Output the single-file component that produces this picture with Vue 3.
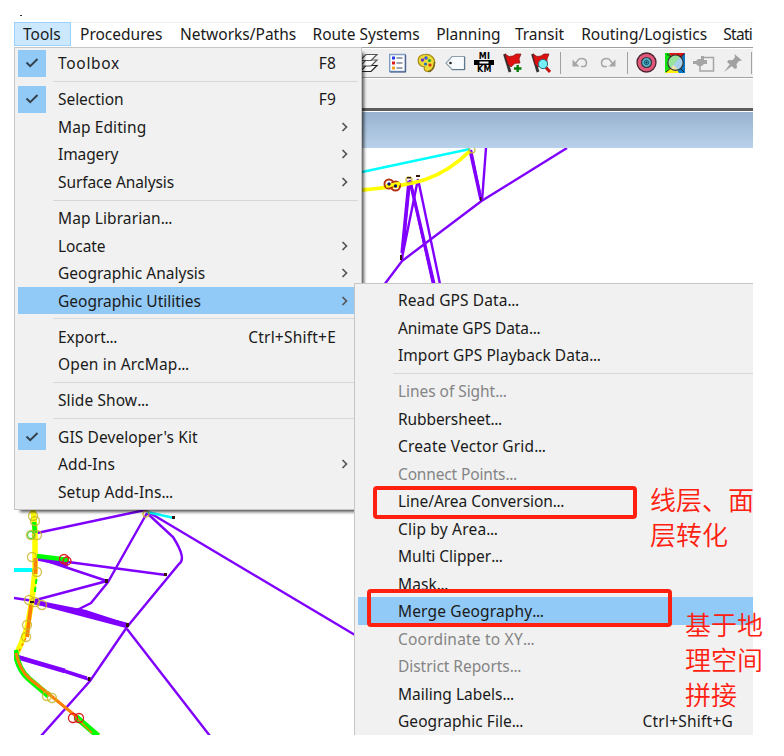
<script setup>
const menuBar = [
  { label: 'Tools', w: 57, active: true },
  { label: 'Procedures', w: 100 },
  { label: 'Networks/Paths', w: 132.5 },
  { label: 'Route Systems', w: 123.7 },
  { label: 'Planning', w: 78.7 },
  { label: 'Transit', w: 66.3 },
  { label: 'Routing/Logistics', w: 142.2 },
  { label: 'Stati', w: 38.6, tight: true }
]

const toolsMenu = [
  { label: 'Toolbox', key: 'F8', checked: true, ls: 0.7 },
  { sep: true },
  { label: 'Selection', key: 'F9', checked: true, ls: -0.05 },
  { label: 'Map Editing', sub: true },
  { label: 'Imagery', sub: true, ls: -0.1 },
  { label: 'Surface Analysis', sub: true, ls: -0.1 },
  { sep: true },
  { label: 'Map Librarian', dots: true },
  { label: 'Locate', sub: true, ls: -0.1 },
  { label: 'Geographic Analysis', sub: true, ls: 0 },
  { label: 'Geographic Utilities', sub: true, hot: true, ls: 0 },
  { sep: true },
  { label: 'Export', dots: true, ls: 0, key: 'Ctrl+Shift+E' },
  { label: 'Open in ArcMap', dots: true, ls: 0.15 },
  { sep: true },
  { label: 'Slide Show', dots: true },
  { sep: true },
  { label: "GIS Developer's Kit", checked: true },
  { label: 'Add-Ins', sub: true },
  { label: 'Setup Add-Ins', dots: true }
]

const geoMenu = [
  { label: 'Read GPS Data', dots: true },
  { label: 'Animate GPS Data', dots: true, ls: -0.1 },
  { label: 'Import GPS Playback Data', dots: true, ls: 0.05 },
  { sep: true },
  { label: 'Lines of Sight', dots: true, off: true, ls: -0.05 },
  { label: 'Rubbersheet', dots: true, ls: -0.1 },
  { label: 'Create Vector Grid', dots: true, ls: 0.15 },
  { label: 'Connect Points', dots: true, off: true, ls: -0.15 },
  { label: 'Line/Area Conversion', dots: true, ls: -0.05 },
  { label: 'Clip by Area', dots: true, ls: 0.2 },
  { label: 'Multi Clipper', dots: true, ls: 0 },
  { label: 'Mask', dots: true },
  { label: 'Merge Geography', dots: true, hot: true, ls: 0.15 },
  { label: 'Coordinate to XY', dots: true, off: true, ls: 0.2 },
  { label: 'District Reports', dots: true, off: true, ls: -0.05 },
  { label: 'Mailing Labels', dots: true, ls: 0 },
  { label: 'Geographic File', dots: true, ls: 0.05, key: 'Ctrl+Shift+G' }
]

const stops = [
  [33, 516], [35, 521], [31, 535], [37, 535], [32, 557], [37, 572], [29, 600], [35, 602], [42, 605],
  [27, 625], [26, 637], [47, 696], [52, 698]
]
</script>

<template>
  <div class="page">
    <span class="speck"></span>
    <div class="window">
      <nav class="menubar">
        <span
          v-for="m in menuBar"
          :key="m.label"
          class="top-item"
          :class="{ active: m.active, tight: m.tight }"
          :style="{ width: m.w + 'px' }"
        >{{ m.label }}</span>
      </nav>

      <div class="toolbar">
        <span class="cell">
          <svg width="20" height="20" viewBox="0 0 20 20" fill="#fff" stroke="#555" stroke-width="1.2">
            <path d="M1 18.500h11l6-6H7z" stroke="#222" /><path d="M1 13h11l6-6H7z" /><path d="M1 7.500h11l6-6H7z" />
          </svg>
        </span>
        <span class="cell">
          <svg width="20" height="20" viewBox="0 0 20 20">
            <path d="M1.700 1.500h15.500v17H1.700z" fill="#fff" stroke="#7f9bc4" stroke-width="1.4" />
            <path d="M17.700 2v17H2" fill="none" stroke="#3f5680" />
            <path d="M8.500 5h6M8.500 10h6M8.500 15h6" stroke="#7b8798" stroke-width="1.300" />
            <path d="M4 3.500h3v3H4z" fill="#2d39e8" /><path d="M4 8.500h3v3H4z" fill="#dc1c1c" /><path d="M4 13.500h3v3H4z" fill="#f0a51c" />
          </svg>
        </span>
        <span class="cell">
          <svg width="20" height="20" viewBox="0 0 20 20">
            <path d="M8 1.500C14 1 18 5 17.700 10c-.2 5-3 8.500-6.700 8.500-3 0-4.500-2-3.500-4.500C4 13.500 1 11.500 1.200 7 1.300 3.500 4 1.700 8 1.500z" fill="#efdb35" stroke="#a58b17" stroke-width="1.200" />
            <path d="M17.500 9c0 6-3 9.500-6.500 9.500" fill="none" stroke="#77651b" stroke-width="1.500" />
            <circle cx="5.500" cy="7" r="1.700" fill="#6b35d0" /><circle cx="9" cy="5" r="1.700" fill="#3153df" />
            <circle cx="12.500" cy="7.500" r="1.600" fill="#21a43a" /><circle cx="13" cy="12" r="1.600" fill="#d82c1c" /><circle cx="8.500" cy="11" r="1.600" fill="#2370c0" />
          </svg>
        </span>
        <span class="cell">
          <svg width="21" height="20" viewBox="0 0 21 20">
            <path d="M1 10.200l6-6.700h12.500v13H7z" fill="#f8fbfd" stroke="#8da0ab" stroke-width="1.200" />
            <path d="M19.700 4v12.700H7" fill="none" stroke="#547088" /><circle cx="5.500" cy="10" r="1.300" fill="#222" />
          </svg>
        </span>
        <span class="cell">
          <svg width="22" height="22" viewBox="0 0 22 22">
            <text x="11.500" y="6.500" class="unit">MI</text>
            <path d="M1 8h20v5H1z" fill="#000" /><path d="M6.500 9.500h9v2H6.500z" fill="#fff" />
            <text x="11.500" y="20" class="unit">KM</text>
          </svg>
        </span>
        <span class="cell">
          <svg width="20" height="20" viewBox="0 0 20 20">
            <path d="M1.500 1l5.500 18" stroke="#333" stroke-width="2.800" /><path d="M2 1l4 2.500 4-.5 3-2 5 0-2 5 1 4-5 .3-4 3.700-3-3z" fill="#de1111" stroke="#811" stroke-width=".7" />
            <path d="M14.700 12v7M11 15.500h7.500" stroke="#077a0c" stroke-width="2.400" />
          </svg>
        </span>
        <span class="cell">
          <svg width="20" height="20" viewBox="0 0 20 20">
            <path d="M1.500 1l5.500 18" stroke="#333" stroke-width="2.800" /><path d="M2 1l4 2.500 4-.5 3-2 5 0-2 5v5l-6 1-3 2-3-3z" fill="#de1111" stroke="#811" stroke-width=".7" />
            <path d="M14.500 14l4.500 5" stroke="#c51010" stroke-width="3" /><circle cx="12" cy="11" r="4.600" fill="#75eef5" stroke="#247482" />
          </svg>
        </span>
        <span class="divider"></span>
        <span class="cell">
          <svg width="18" height="14" viewBox="0 0 18 14" fill="none" stroke="#a6a6a6" stroke-width="1.500">
            <path d="M4 8l3.500-4.500C10 1.500 15.500 2.500 15.500 7c0 2-1 3-2 3.500H10" /><path d="M1.500 3.500v7h7z" fill="#a6a6a6" stroke="none" />
          </svg>
        </span>
        <span class="cell">
          <svg width="18" height="14" viewBox="0 0 18 14" fill="none" stroke="#a6a6a6" stroke-width="1.500">
            <path d="M14 8l-3.500-4.500C8 1.500 2.500 2.500 2.500 7c0 2 1 3 2 3.500H8" /><path d="M16.500 3.500v7h-7z" fill="#a6a6a6" stroke="none" />
          </svg>
        </span>
        <span class="divider"></span>
        <span class="cell">
          <svg width="21" height="21" viewBox="0 0 21 21">
            <circle cx="10.500" cy="10.500" r="9.500" fill="#e2587a" stroke="#4b2330" stroke-width="1.300" />
            <circle cx="10.500" cy="10.500" r="5" fill="#58b6cb" stroke="#34353f" stroke-width="1.200" />
            <circle cx="10.500" cy="10.500" r="2.200" fill="#3fc7e5" stroke="#174a6d" /><circle cx="10.500" cy="10.500" r="1" fill="#111" />
          </svg>
        </span>
        <span class="cell">
          <svg width="20" height="20" viewBox="0 0 20 20">
            <path d="M0 0h20v20H0z" fill="#0876c4" /><path d="M0 0h6l4 10-6 10H0z" fill="#0de20d" /><path d="M4 0h16l-4 5H7z" fill="#e31212" />
            <path d="M0 20l5-5h6l3 5z" fill="#ffef0a" />
            <circle cx="10.500" cy="9.700" r="7.700" fill="#a6d0ea" /><path d="M5 15.200A7.700 7.700 0 0 1 15.500 3.800z" fill="#98e39a" />
            <path d="M5.500 15.500l3-3.500 4.500 5a7.700 7.700 0 0 1-7.500-1.500z" fill="#f1e4a4" />
            <circle cx="10.500" cy="9.700" r="7.700" fill="none" stroke="#333" stroke-width="1.200" /><path d="M1 19l5-4M19 1l-4 3M19 19l-4-4M2 1l4 3" stroke="#222" />
          </svg>
        </span>
        <span class="cell">
          <svg width="22" height="20" viewBox="0 0 22 20">
            <path d="M8 4.500h12.500v13.500H7v-5" fill="none" stroke="#a5a5a5" stroke-width="1.500" />
            <path d="M0 8h3l2-2h3V3h3v4h3v4h-3l-2 2H5l-2-2H0z" fill="#a5a5a5" />
          </svg>
        </span>
        <span class="cell">
          <svg width="20" height="20" viewBox="0 0 20 20" fill="#a0a0a0">
            <path d="M11.500 1L19 7.500l-3 .5-2.500 3 .5 4-2 1-8-7 1.500-2 4 .3 2.500-3z" /><path d="M7 11l-6 8 8-6z" />
          </svg>
        </span>
        <span class="divider"></span>
      </div>

      <div class="dock"></div>
      <div class="caption"></div>

      <svg class="map" width="739" height="587" viewBox="14 148 739 587" fill="none">
        <g stroke="#8000ff" stroke-width="2.400">
          <path d="M567 148L481.500 201 402 261l-18 24" />
          <path d="M486 148l-4 53" />
          <path d="M471 150l10.500 51M410 180l-8 81M418 179l-16 79M410 180l23 104M418 179l22 105" />
          <path d="M470 150l11 50M409 181l-7 72M410 181l24 103" stroke-width="3.300" />
          <path d="M37 533l108-23 210 125" />
          <path d="M147 513l-39 69-17 21-16 8M147 513l26 24q14 22 6 27L127 627l-37 54-49 55" />
          <path d="M127 629l83 107M38 558l128 17M38 558l69 23M32 601l75-20M14 598l20 3 93 23M32 602l95 25M77 609l50 17M17 656l73 24" />
          <path d="M34 602l50 10M17 657l48 14" stroke-width="4.800" />
          <path d="M84 611l40 13M65 671l22 7" stroke-width="3.200" />
          <path d="M38 559l30 6" stroke-width="3.500" />
        </g>
        <path d="M362 172l108-23M147 512l27 6" stroke="#0ff" stroke-width="2.500" />
        <path d="M14 570h19" stroke="#0ff" stroke-width="4" />
        <path d="M362 190c55-5 78-10 108-39" stroke="#ff0" stroke-width="3.800" />
        <path d="M33 510l2 20v40l-3 30-5 28-6 16-6 13" stroke="#ff0" stroke-width="5.500" />
        <path d="M34 522l1 11M37 556l32 4" stroke="#0f0" stroke-width="4.500" />
        <path d="M36.500 579l-2 16" stroke="#0f0" stroke-width="2" stroke-dasharray="5 3" />
        <path d="M35.500 558v16M31 605l-4 32" stroke="#ff8000" stroke-width="3.800" />
        <path d="M26 638l-9 17" stroke="#ff8000" stroke-width="1.500" stroke-dasharray="3 3" />
        <path d="M15 650q3 20 14 29l20 17" stroke="#0f0" stroke-width="6" />
        <path d="M16 653q4 18 14 26l20 16 27 22 22 18" stroke="#ff8000" stroke-width="3" />
        <path d="M76 717l22 19" stroke="#0f0" stroke-width="6" />
        <path d="M72 713l20 20" stroke="#ff8000" stroke-width="1.500" />
        <g stroke="#c9b526" stroke-width="1.400" stroke-opacity=".8">
          <circle v-for="(s, i) in stops" :key="i" :cx="s[0]" :cy="s[1]" r="4.500" />
          <circle cx="409" cy="180" r="3" /><circle cx="472" cy="150" r="3" /><circle cx="146" cy="514" r="3" />
        </g>
        <g stroke="#dc1c1c" stroke-width="1.300">
          <circle cx="64" cy="559" r="4.500" /><circle cx="67" cy="561" r="4" /><circle cx="73" cy="718" r="4.500" /><circle cx="79" cy="718" r="4.500" />
          <circle cx="389" cy="184" r="4.500" stroke="#b53213" stroke-width="2" /><circle cx="395.500" cy="186" r="4.500" stroke="#b53213" stroke-width="2" />
        </g>
        <path d="M386 186l14-2.500" stroke="#ff0" stroke-width="3.500" />
        <circle cx="31" cy="535" r="3.500" stroke="#2ad02a" />
        <g fill="#32140a">
          <circle cx="389" cy="184" r="1.700" fill="#101070" /><circle cx="395.500" cy="186" r="1.700" fill="#101070" />
          <path d="M400 255h2v5h-2zM480 197h1.500v4H480zM407 177h4v1.500h-4zM416 175h4v2h-4zM164 573h3v3h-3zM105 579h3v4h-3zM126 623h3v4h-3zM88 677h2.500v4H88zM172 516h3v3h-3zM30 601h4v2h-4z" />
        </g>
      </svg>

      <div class="menu tools">
        <template v-for="(it, i) in toolsMenu" :key="i">
          <div v-if="it.sep" class="sep"></div>
          <div v-else class="item" :class="{ hot: it.hot }">
            <span class="gutter">
              <span v-if="it.checked" class="check">
                <svg width="14" height="12" viewBox="0 0 14 12" fill="none" stroke="#333f4b" stroke-width="1.900"><path d="M1.500 5.500l3.700 3.700L12.500 2" /></svg>
              </span>
            </span>
            <span class="label" :style="{ letterSpacing: (it.ls ?? 0.1) + 'px' }">{{ it.label }}<i v-if="it.dots">...</i></span>
            <span v-if="it.key" class="key">{{ it.key }}</span>
            <svg v-if="it.sub" class="arrow" width="8" height="12" viewBox="0 0 8 12" fill="none" stroke="#555" stroke-width="1.700"><path d="M1.500 2L5.500 6l-4 4" /></svg>
          </div>
        </template>
      </div>

      <div class="menu geo">
        <template v-for="(it, i) in geoMenu" :key="i">
          <div v-if="it.sep" class="sep"></div>
          <div v-else class="item" :class="{ hot: it.hot, off: it.off }">
            <span class="gutter"></span>
            <span class="label" :style="{ letterSpacing: (it.ls ?? 0.1) + 'px' }">{{ it.label }}<i v-if="it.dots">...</i></span>
            <span v-if="it.key" class="key">{{ it.key }}</span>
          </div>
        </template>
      </div>

      <div class="note convert">线层、面<br />层转化</div>
    </div>

    <div class="mark line-area"></div>
    <div class="mark merge"></div>
    <div class="note join">基于地<br />理空间<br />拼接</div>
  </div>
</template>

<style>
body { background: #fff; overflow: hidden; }
</style>

<style scoped>
.page {
  position: relative;
  box-sizing: border-box;
  width: 784px;
  height: 756px;
  padding: 22px 0 0 14px;
  overflow: hidden;
  background: #fff;
  color: #1a1a1a;
  font-family: "Noto Sans", "Noto Sans CJK SC", sans-serif;
  font-size: 15.5px;
}
.speck { position: absolute; left: 20px; top: 15px; width: 2px; height: 1px; background: #333; }
.window {
  position: relative;
  display: flex;
  flex-direction: column;
  width: 739px;
  height: 713px;
  overflow: hidden;
}
.menubar {
  display: flex;
  flex: none;
  box-sizing: border-box;
  height: 25px;
  border-top: 1px solid #f0f0f0;
}
.top-item {
  box-sizing: border-box;
  flex: none;
  height: 24px;
  padding-left: 9px;
  line-height: 23px;
  white-space: nowrap;
}
.top-item.active {
  margin-top: -1px;
  padding-left: 8px;
  border: 1px solid #99d1ff;
  background: #cce8ff;
}
.top-item.tight { letter-spacing: -.75px; }
.toolbar {
  display: flex;
  flex: none;
  align-items: center;
  box-sizing: border-box;
  height: 31px;
  padding-left: 341px;
  border-top: 1px solid #a0a0a0;
  border-bottom: 1px solid #a0a0a0;
  background: #f0f0f0;
  box-shadow: inset 0 1px #fff;
}
.cell { display: flex; flex: none; align-items: center; justify-content: center; width: 28.7px; }
.divider { flex: none; width: 1px; height: 22px; margin: 0 4.3px; background: #a0a0a0; }
.unit { font: bold 8px "DejaVu Sans", sans-serif; text-anchor: middle; fill: #000; letter-spacing: .3px; }
.dock { flex: none; box-sizing: border-box; height: 33px; background: #f0f0f0; border-bottom: 3px solid #5c5c5c; border-top: 1px solid #fff; }
.caption { flex: none; box-sizing: border-box; height: 37px; background: linear-gradient(#98b2cf, #b9d1ea); border-top: 1px solid #fff; }
.map { flex: none; display: block; }

.menu {
  position: absolute;
  box-sizing: border-box;
  padding-top: 2px;
  border: 1px solid #c6c6c6;
  background: #f1f1f1;
}
.tools { left: 0; top: 24.500px; width: 348px; height: 463.500px; box-shadow: 4px 4px 3px -2px rgba(0, 0, 0, .65); }
.geo { left: 340px; top: 261px; width: 480px; height: 500px; padding-top: 2.300px; }
.item { display: flex; align-items: center; height: 27.500px; margin-left: 3px; white-space: nowrap; }
.tools .item { margin-right: 3px; }
.item.hot { background: #91c9f7; }
.item.off { color: #858585; }
.gutter { flex: none; width: 40px; height: 27.500px; }
.check { display: flex; align-items: center; justify-content: center; width: 27.500px; height: 27.500px; background: #91c9f7; }
.label { flex: 1; }
.label i { font-style: normal; letter-spacing: -.4px; }
.key { flex: none; padding-right: 22px; letter-spacing: .22px; }
.geo .key { padding-right: 100px; }
.arrow { flex: none; margin-right: 9px; }
.sep { height: 8.670px; margin: 0 3px 0 38px; background: linear-gradient(#d7d7d7, #d7d7d7) 0 4px / 100% 1px no-repeat; }

.mark { position: absolute; box-sizing: border-box; border: 4px solid #ff2010; border-radius: 4px; }
.line-area { left: 373px; top: 486px; width: 264px; height: 33px; }
.merge { left: 367px; top: 589px; width: 305px; height: 38px; }
.note {
  position: absolute;
  color: #ff2010;
  font-family: "Noto Sans CJK SC", sans-serif;
  font-size: 26px;
  font-weight: 350;
  line-height: 35px;
  white-space: nowrap;
}
.convert { left: 636px; top: 459px; }
.join { left: 685px; top: 606px; }
</style>
